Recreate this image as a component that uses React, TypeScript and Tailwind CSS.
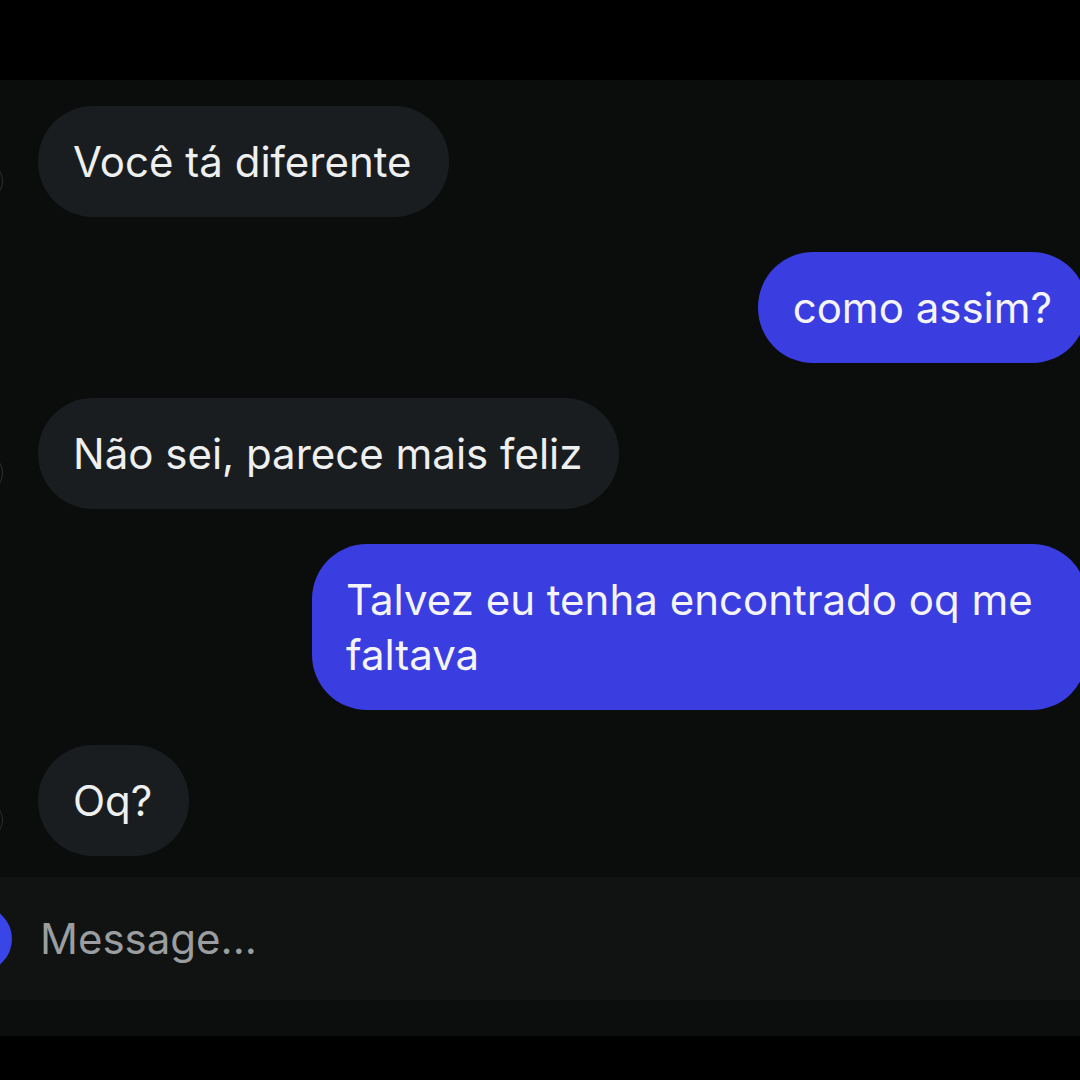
import React from "react";

type Msg = { from: "them" | "me"; lines: string[]; wide?: boolean };

const messages: Msg[] = [
  { from: "them", lines: ["Você tá diferente"] },
  { from: "me", lines: ["como assim?"] },
  { from: "them", lines: ["Não sei, parece mais feliz"] },
  { from: "me", lines: ["Talvez eu tenha encontrado oq me", "faltava"], wide: true },
  { from: "them", lines: ["Oq?"] },
];

function Bubble({ msg }: { msg: Msg }) {
  if (msg.from === "me") {
    return (
      <div className="flex justify-end mr-[-7px]">
        <div
          className={
            "bg-[#3a3ddf] text-[#f4f4f8] rounded-[55px] py-[28px] text-[42px] leading-[55px] whitespace-nowrap " +
            (msg.wide ? "w-[775px] pl-[34px]" : "px-[35px]")
          }
        >
          {msg.lines.map((l, i) => (
            <div key={i}>{l}</div>
          ))}
        </div>
      </div>
    );
  }
  return (
    <div className="flex items-end">
      {/* avatar, mostly off screen */}
      <div className="w-[40px] h-[40px] shrink-0 rounded-full border border-[#2c2e30] ml-[-37px] mb-[16px]" />
      <div className="ml-[35px] bg-[#1a1d20] text-[#eef0f0] rounded-[55px] pl-[35px] pr-[37px] py-[28px] text-[42px] leading-[55px] whitespace-nowrap">
        {msg.lines.map((l, i) => (
          <div key={i}>{l}</div>
        ))}
      </div>
    </div>
  );
}

export default function App() {
  return (
    <div
      className="w-[1080px] h-[1080px] bg-black flex flex-col overflow-hidden"
      style={{ fontFamily: "Inter, 'Noto Sans', sans-serif" }}
    >
      <div className="h-[80px] bg-black shrink-0" />

      {/* Chat */}
      <div className="flex-1 bg-[#0b0c0c] flex flex-col gap-[35px] pt-[26px]">
        {messages.map((m, i) => (
          <Bubble key={i} msg={m} />
        ))}
      </div>

      {/* Input */}
      <div className="h-[123px] shrink-0 bg-[#101311] flex items-center">
        <div className="w-[66px] h-[66px] rounded-full bg-[#3a45e8] ml-[-54px] shrink-0" />
        <div className="ml-[28px] text-[42px] text-[#9b9ea0]">Message...</div>
      </div>
      <div className="h-[36px] shrink-0 bg-[#0c0d0d]" />
      <div className="h-[44px] shrink-0 bg-black" />
    </div>
  );
}
